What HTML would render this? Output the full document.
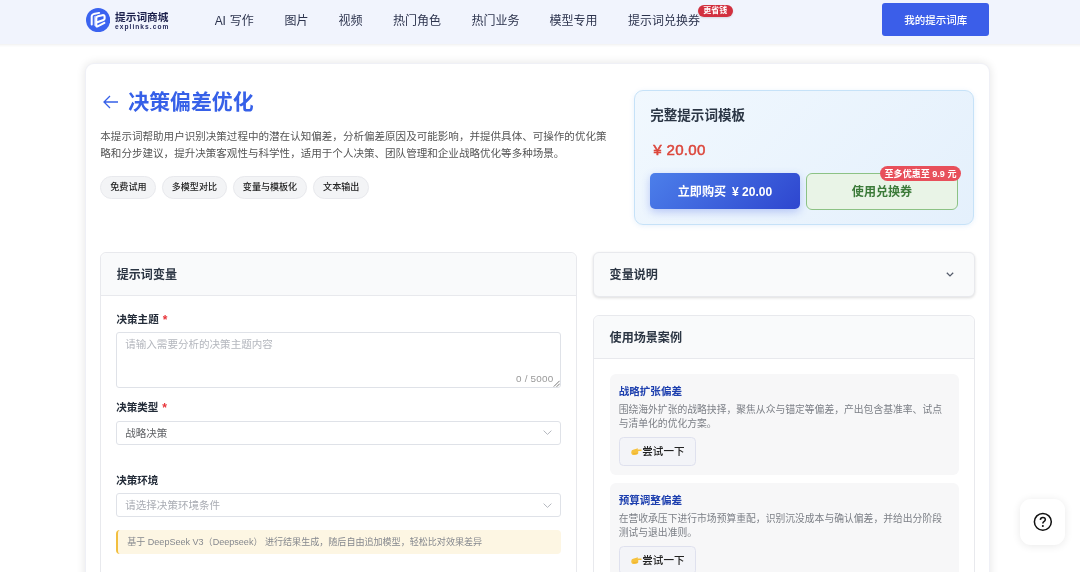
<!DOCTYPE html>
<html lang="zh-CN">
<head>
<meta charset="utf-8">
<title>决策偏差优化 - 提示词商城</title>
<style>
*{box-sizing:border-box;margin:0;padding:0}
html,body{width:1080px;height:572px;overflow:hidden}
#wrap{position:absolute;left:0;top:0;width:1080px;height:572px;overflow:hidden;will-change:transform}
body{background:#fff;font-family:"Liberation Sans","Noto Sans CJK SC",sans-serif;color:#333;position:relative}
.nav{position:absolute;left:0;top:0;width:1080px;height:43.7px}
.nav::before{content:"";position:absolute;left:-12px;right:-12px;top:-5px;bottom:0;background:#f1f4fd;box-shadow:0 1px 3px rgba(0,0,0,.07)}
.logo{position:absolute;left:85.8px;top:7.5px;width:24.2px;height:24.2px}
.brand{position:absolute;left:115px;top:9.5px;font-size:10.7px;font-weight:700;color:#1b1f4b;line-height:14px;letter-spacing:0}
.brand2{position:absolute;left:115px;top:23.3px;font-size:6.6px;font-weight:700;color:#262a5a;line-height:8px;letter-spacing:1.05px;font-family:"Liberation Sans",sans-serif;white-space:nowrap}
.nav a{position:absolute;top:11.5px;font-size:12px;color:#2c334d;line-height:18px;text-decoration:none;white-space:nowrap}
.badge{position:absolute;left:698px;top:5px;width:34.5px;height:11.7px;text-align:center;border-radius:6px;background:#d2303f;box-shadow:0 1px 2px rgba(0,0,0,.12);color:#fff;font-size:8px;line-height:11.5px;font-weight:700;white-space:nowrap}
.mybtn{position:absolute;left:882.2px;top:3px;width:107px;height:32.8px;border-radius:3px;background:#3b5ee9;color:#fff;font-size:10.5px;line-height:34.2px;text-align:center;font-weight:500}
.card{position:absolute;left:84.9px;top:62.6px;width:904.7px;height:560px;border-radius:9px;background:#fff;border:1px solid rgba(232,234,242,.7);box-shadow:0 0 10px rgba(0,0,0,.11)}
.back{position:absolute;left:103.2px;top:95.3px;width:16px;height:14px}
h1{position:absolute;left:128.3px;top:88.2px;font-size:20.9px;line-height:28px;font-weight:700;color:#3660e8;white-space:nowrap}
.desc{position:absolute;left:100.3px;top:128px;width:520px;font-size:10.55px;line-height:16.8px;color:#555;white-space:nowrap}
.tag{position:absolute;top:176.2px;height:22.8px;border-radius:11.4px;background:#f3f4f6;border:1px solid #e8e9ed;font-size:9.05px;line-height:21.8px;color:#222;text-align:center;font-weight:500;white-space:nowrap}
.buy{position:absolute;left:634px;top:89.8px;width:340px;height:134.9px;border-radius:9px;border:1px solid #c6e2f8;background:linear-gradient(135deg,#f1f8fe 0%,#e4f0fc 100%);box-shadow:0 1px 5px rgba(80,150,230,.13)}
.buy .t{position:absolute;left:15.2px;top:15.3px;font-size:13.57px;font-weight:700;color:#2b3645;line-height:20px;white-space:nowrap}
.buy .p{position:absolute;left:18.3px;top:48.8px;letter-spacing:.3px;font-size:15.08px;color:#dc473c;line-height:20px;-webkit-text-stroke:0.5px #dc473c;white-space:nowrap}
.b1{position:absolute;left:649.7px;top:172.8px;width:150.6px;height:36.4px;border-radius:5px;background:linear-gradient(135deg,#4c7fea,#2e46cf);color:#fff;font-weight:700;font-size:12.07px;line-height:38px;text-align:center;box-shadow:0 3px 9px rgba(59,94,233,.3);white-space:nowrap}
.b2{position:absolute;left:806px;top:172.8px;width:152px;height:36.8px;border-radius:6px;background:#e9f4e7;border:1px solid #8cc285;color:#3b7a39;font-weight:700;font-size:12.07px;line-height:36.6px;text-align:center}
.b2b{position:absolute;left:880px;top:166.2px;width:81px;height:15.1px;text-align:center;border-radius:7.6px;background:#e8505b;color:#fff;font-size:9.05px;line-height:16.4px;font-weight:700;white-space:nowrap}
.panel{position:absolute;border:1px solid #e8e9ed;border-radius:6px;background:#fff}
.ph{position:absolute;left:0;top:0;right:0;background:#f9fafb;border-bottom:1px solid #e8e9ed;border-radius:6px 6px 0 0;font-size:12.07px;font-weight:700;color:#2c3644;white-space:nowrap}
.lbl{position:absolute;font-size:10.55px;font-weight:700;color:#222b38;line-height:14px;white-space:nowrap}
.lbl i{color:#e8353a;font-style:normal;font-weight:700;font-size:12px;position:relative;left:1px;top:1px}
.inp{position:absolute;left:116.2px;width:444.8px;border:1px solid #dfe2e8;border-radius:3px;background:#fff;font-size:10.55px}
.inp span{position:absolute;left:8px;white-space:nowrap;line-height:14px}
.inp em{position:absolute;right:6.4px;top:39.6px;font-style:normal;font-size:9.9px;letter-spacing:.25px;line-height:12px;color:#999;white-space:nowrap}
.rs{position:absolute;right:-0.5px;bottom:-0.5px;width:7px;height:7px}
.chev{position:absolute;right:8.2px;top:8.8px;width:9px;height:5px}
.tip{position:absolute;left:116.2px;top:529.5px;width:444.8px;height:24.2px;background:#fdf6e3;border-left:2.3px solid #f2bf3f;border-radius:4px;font-size:9.05px;line-height:24.4px;color:#85888e;padding-left:9px;white-space:nowrap}
.case{position:absolute;left:609.6px;width:349.8px;height:101px;background:#f7f7f8;border-radius:6px}
.case b{position:absolute;left:9.1px;top:10px;font-size:10.55px;color:#1e40af;line-height:14px;white-space:nowrap}
.case p{position:absolute;left:9.1px;top:29.1px;font-size:9.8px;line-height:14.5px;color:#7d8087;white-space:nowrap}
.try{position:absolute;left:9.1px;top:63.5px;width:77.8px;height:28.3px;border:1px solid #dfe1ee;border-radius:4.5px;background:#f3f4f8;font-size:10.55px;line-height:27.7px;color:#222;font-weight:500;padding-left:22.6px;white-space:nowrap}
.try svg{position:absolute;left:11.4px;top:9.7px;width:11px;height:7.2px}
.help{position:absolute;left:1019.6px;top:499.3px;width:45.3px;height:45.6px;border-radius:11px;background:#fff;box-shadow:0 1px 8px rgba(0,0,0,.09)}
.help svg{position:absolute;left:12.2px;top:12px;width:21.7px;height:21.7px}
</style>
</head>
<body><div id="wrap">
<div class="nav">
  <svg class="logo" viewBox="0 0 24.2 24.2"><circle cx="12.1" cy="12.1" r="12.1" fill="#3b63f0"/><path d="M5.7 16.6V8.6Q5.7 6.6 7.7 6.1L13.2 4.9" fill="none" stroke="#fff" stroke-width="2" stroke-linecap="round"/><path d="M7.9 17.6V8.4L10 7.6V18.6Z" fill="#fff" opacity=".55"/><path d="M18.4 14.9L11.6 18.4Q10.3 19 10.3 17.6V10.2Q10.3 8.6 12 8.2L16.4 7.2Q18.6 6.8 18.6 8.8V10.6Q18.6 11.6 17.4 12L11.3 14.2" fill="none" stroke="#fff" stroke-width="2.1" stroke-linecap="round" stroke-linejoin="round"/></svg>
  <div class="brand">提示词商城</div>
  <div class="brand2">explinks.com</div>
  <a style="left:214.8px;word-spacing:1.1px"><span style="letter-spacing:-.4px">AI</span> 写作</a>
  <a style="left:284.5px">图片</a>
  <a style="left:338.5px">视频</a>
  <a style="left:393px">热门角色</a>
  <a style="left:471.5px">热门业务</a>
  <a style="left:549.5px">模型专用</a>
  <a style="left:628px">提示词兑换券</a>
  <div class="badge">更省钱</div>
  <div class="mybtn">我的提示词库</div>
</div>
<div class="card"></div>
<svg class="back" viewBox="0 0 16 14"><path d="M7 1L1 7l6 6M1 7h14" fill="none" stroke="#3660e8" stroke-width="1.3"/></svg>
<h1>决策偏差优化</h1>
<div class="desc">本提示词帮助用户识别决策过程中的潜在认知偏差，分析偏差原因及可能影响，并提供具体、可操作的优化策<br>略和分步建议，提升决策客观性与科学性，适用于个人决策、团队管理和企业战略优化等多种场景。</div>
<div class="tag" style="left:100.4px;width:56px">免费试用</div>
<div class="tag" style="left:162px;width:64.8px">多模型对比</div>
<div class="tag" style="left:233px;width:74px">变量与模板化</div>
<div class="tag" style="left:313.2px;width:56px">文本输出</div>
<div class="buy"><div class="t">完整提示词模板</div><div class="p">¥ 20.00</div></div>
<div class="b1">立即购买 <span style="margin-left:2.5px">¥</span> 20.00</div>
<div class="b2">使用兑换券</div>
<div class="b2b">至多优惠至 9.9 元</div>

<div class="panel" style="left:100.3px;top:252px;width:476.6px;height:340px"><div class="ph" style="height:43.3px;line-height:44.2px;padding-left:15.4px">提示词变量</div></div>
<div class="lbl" style="left:116.5px;top:311.5px">决策主题 <i>*</i></div>
<div class="inp" style="top:332px;height:55.6px"><span style="top:4.2px;color:#b4b7be">请输入需要分析的决策主题内容</span><em>0 / 5000</em><svg class="rs" viewBox="0 0 7 7"><path d="M0.8 6.6L6.6 0.8M3.6 6.8L6.8 3.6" stroke="#555" stroke-width=".8" fill="none"/></svg></div>
<div class="lbl" style="left:116.2px;top:400.2px">决策类型 <i>*</i></div>
<div class="inp" style="top:420.7px;height:24px"><span style="top:4.6px;color:#606266">战略决策</span><svg class="chev" viewBox="0 0 9 5"><path d="M0.6 0.6L4.5 4.4L8.4 0.6" stroke="#b4b7be" stroke-width="1" fill="none"/></svg></div>
<div class="lbl" style="left:116.2px;top:472.5px">决策环境</div>
<div class="inp" style="top:493.2px;height:23.7px"><span style="top:4px;color:#aaadb4">请选择决策环境条件</span><svg class="chev" viewBox="0 0 9 5"><path d="M0.6 0.6L4.5 4.4L8.4 0.6" stroke="#b4b7be" stroke-width="1" fill="none"/></svg></div>
<div class="tip">基于 DeepSeek V3（Deepseek） 进行结果生成，随后自由追加模型，轻松比对效果差异</div>

<div class="panel" style="left:593px;top:252px;width:382px;height:44.6px;background:#f9fafb;box-shadow:0 1px 3px rgba(0,0,0,.14);border-radius:6px"><div class="ph" style="height:42px;line-height:44.2px;border-bottom:none;padding-left:15.6px;background:none">变量说明</div><svg style="position:absolute;left:352px;top:18.6px;width:8px;height:5px" viewBox="0 0 8 5"><path d="M0.8 0.8L4 3.9L7.2 0.8" stroke="#555c6b" stroke-width="1.3" fill="none"/></svg></div>
<div class="panel" style="left:593px;top:315.2px;width:382px;height:300px;border-radius:6px"><div class="ph" style="height:43.3px;line-height:44.2px;padding-left:15.6px;border-radius:6px 6px 0 0">使用场景案例</div></div>
<div class="case" style="top:373.8px"><b>战略扩张偏差</b><p>围绕海外扩张的战略抉择，聚焦从众与锚定等偏差，产出包含基准率、试点<br>与清单化的优化方案。</p><div class="try"><svg viewBox="0 0 11 7.2"><path d="M0.2 4.2Q0.2 1.9 2.8 1.5L5.5 0.7Q6.3 -0.1 6.8 0.5L6.6 1.5L10.3 1.6Q10.9 2.3 10.3 3L7.3 3.1L7.2 5.4Q6.6 6.9 4 6.9L1.7 6.9Q0.2 6.4 0.2 4.2Z" fill="#f6c23e"/><path d="M2 5.2Q4 6 6.6 5.2" fill="none" stroke="#e9a92c" stroke-width=".6"/></svg>尝试一下</div></div>
<div class="case" style="top:482.8px"><b>预算调整偏差</b><p>在营收承压下进行市场预算重配，识别沉没成本与确认偏差，并给出分阶段<br>测试与退出准则。</p><div class="try"><svg viewBox="0 0 11 7.2"><path d="M0.2 4.2Q0.2 1.9 2.8 1.5L5.5 0.7Q6.3 -0.1 6.8 0.5L6.6 1.5L10.3 1.6Q10.9 2.3 10.3 3L7.3 3.1L7.2 5.4Q6.6 6.9 4 6.9L1.7 6.9Q0.2 6.4 0.2 4.2Z" fill="#f6c23e"/><path d="M2 5.2Q4 6 6.6 5.2" fill="none" stroke="#e9a92c" stroke-width=".6"/></svg>尝试一下</div></div>
<div class="help"><svg viewBox="0 0 20 20"><circle cx="10" cy="10" r="7.8" fill="none" stroke="#111" stroke-width="1.4"/><path d="M7.7 8.2Q7.8 5.9 10 5.9Q12.3 5.9 12.3 7.9Q12.3 9.1 11 9.8Q10 10.4 10 11.6" fill="none" stroke="#111" stroke-width="1.4"/><circle cx="10" cy="13.9" r=".95" fill="#111"/></svg></div>
</div></body>
</html>
